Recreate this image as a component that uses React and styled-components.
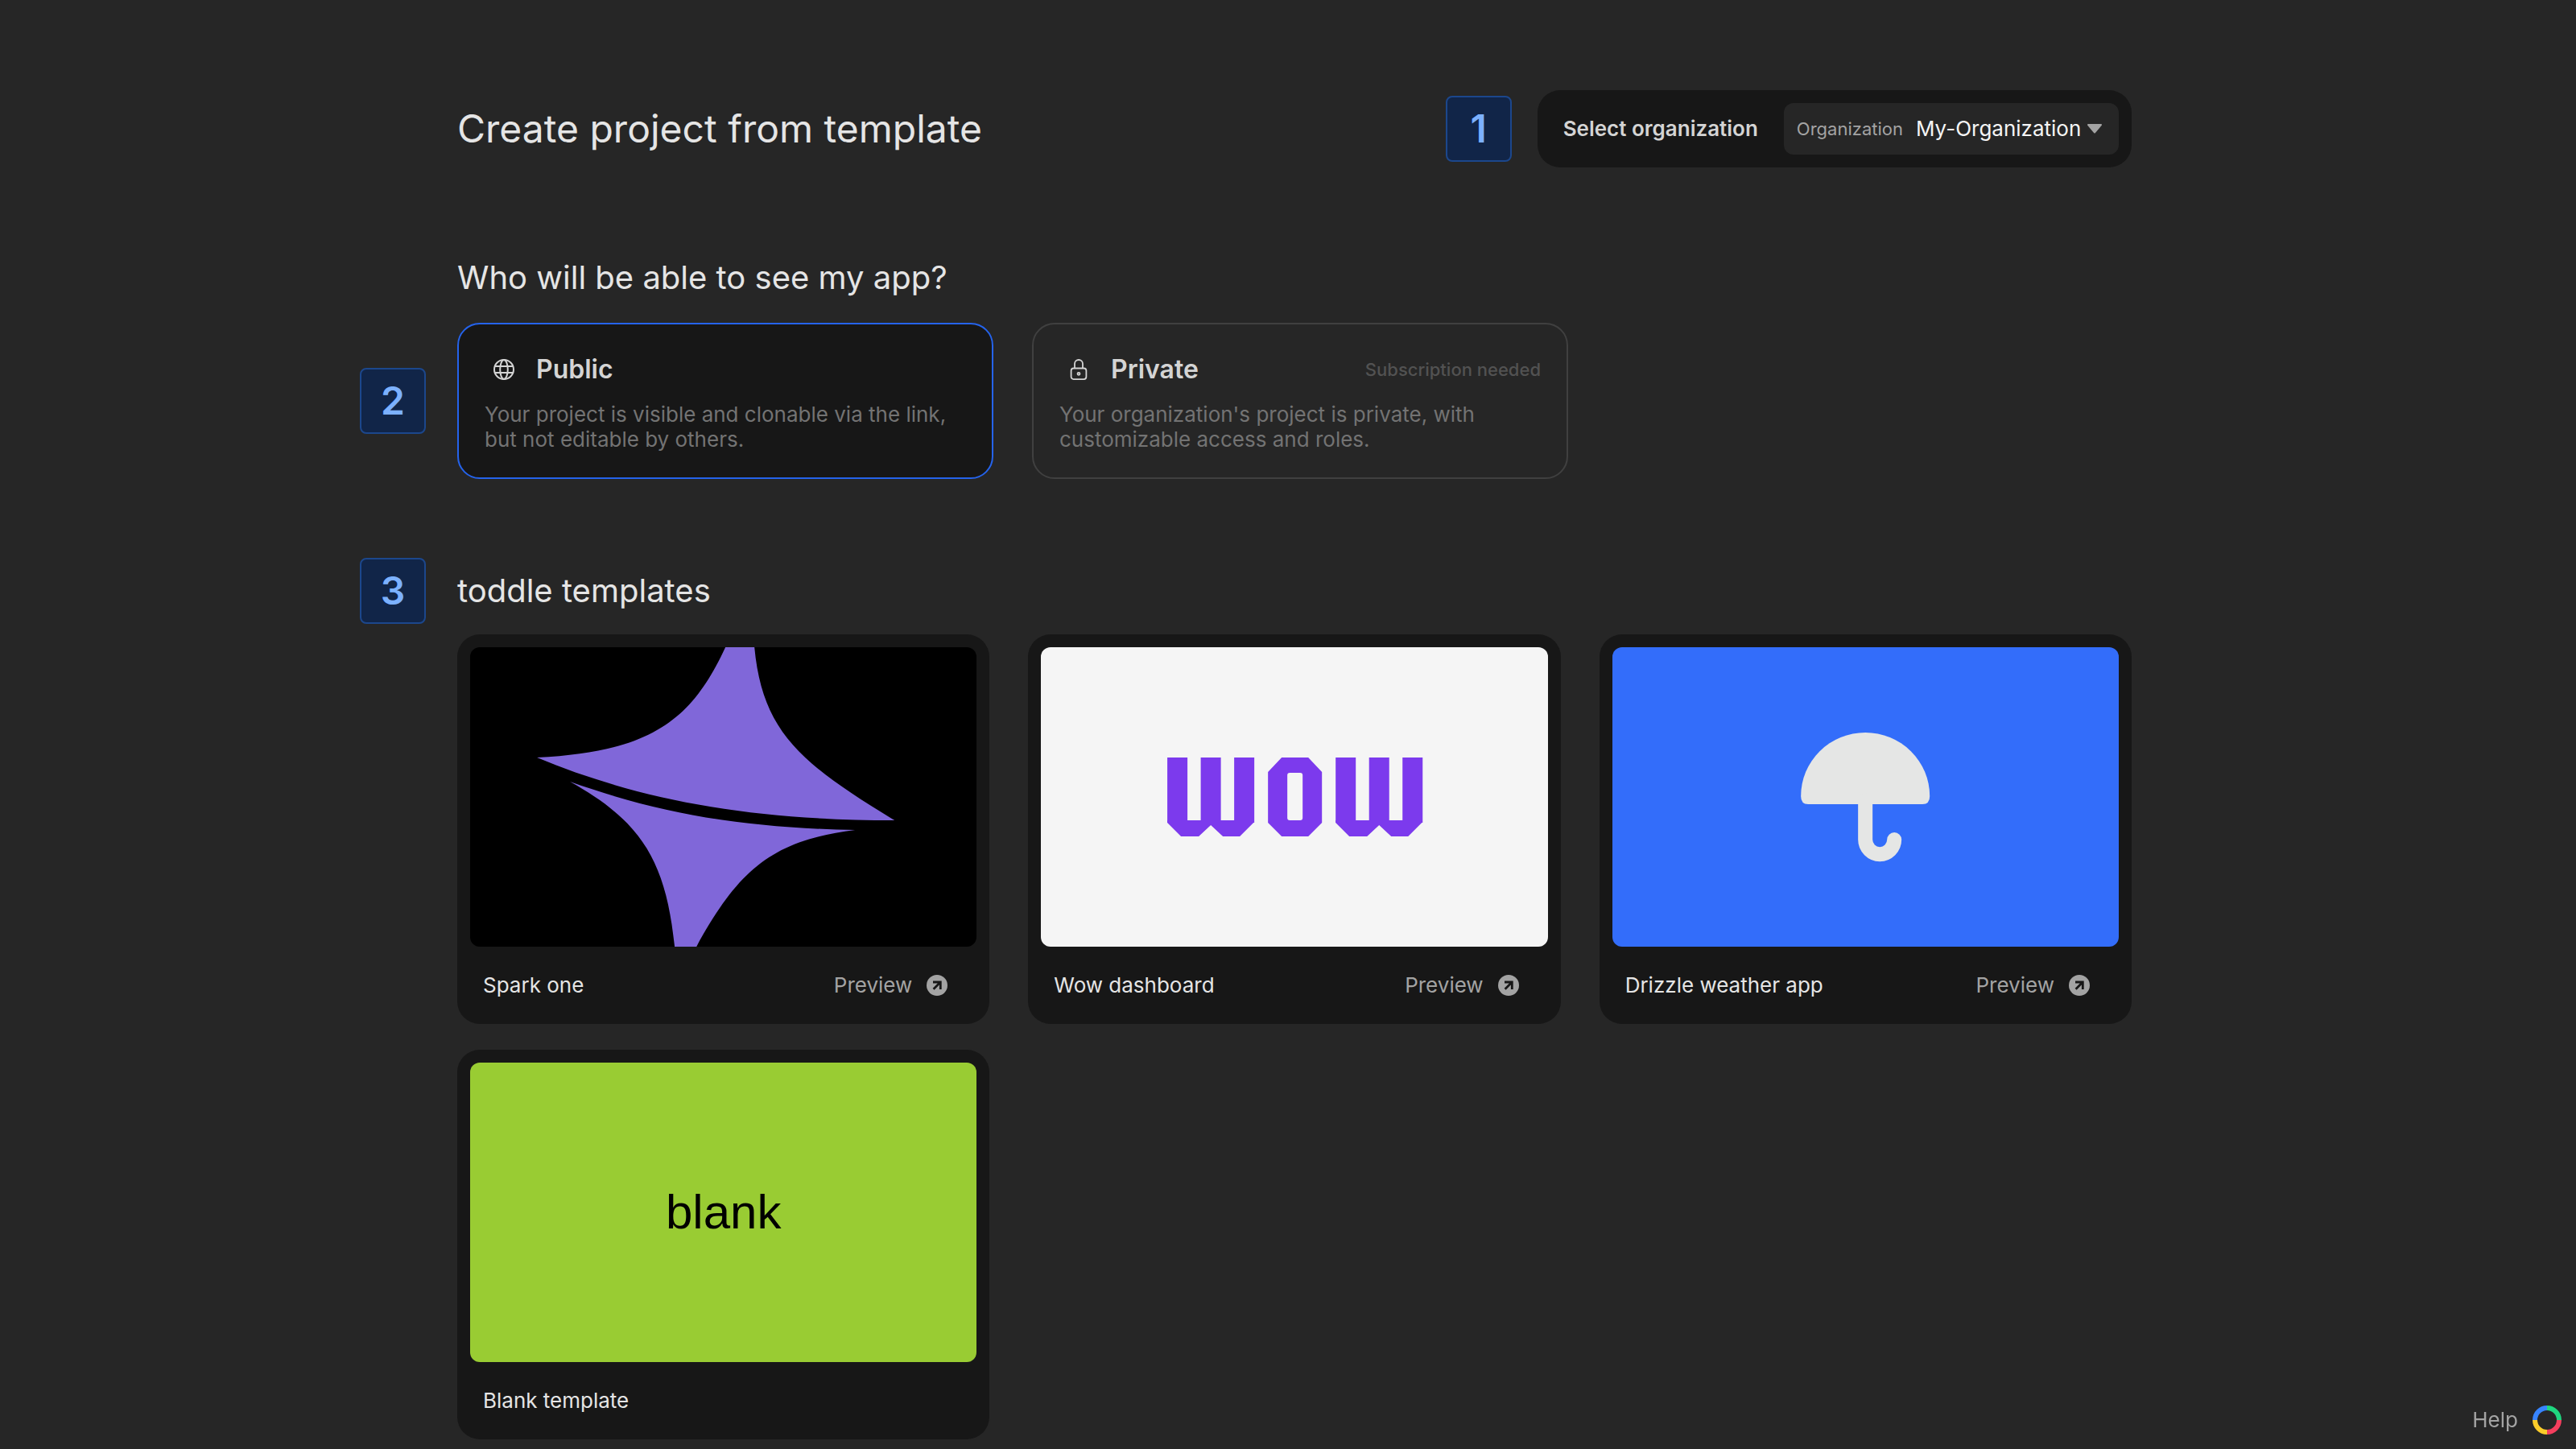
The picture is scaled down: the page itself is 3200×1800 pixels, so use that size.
import React from "react";
import styled, { createGlobalStyle } from "styled-components";

const GlobalStyle = createGlobalStyle`
  *, *::before, *::after { box-sizing: border-box; }
  html { height: 100%; }
  body {
    margin: 0;
    min-height: 100vh;
    background: #262626;
    color: #e5e5e5;
    font-family: Inter, "Liberation Sans", sans-serif;
    font-size: 26px;
    font-weight: 400;
    line-height: 32px;
  }
  h1, h2, h3, p, ul { margin: 0; padding: 0; }
  button, select, input { font: inherit; color: inherit; }
`;

const Page = styled.div`
  display: flex;
  justify-content: center;
  padding: 112px 128px 10px 144px;
`;

const Content = styled.main`
  display: flex;
  flex-direction: column;
  width: 100%;
  max-width: 2080px;
`;

const Header = styled.header`
  display: flex;
  align-items: center;
  justify-content: space-between;
  min-height: 96px;
`;

const Title = styled.h1`
  font-size: 48px;
  line-height: 56px;
  font-weight: 400;
`;

const Heading = styled.h2`
  font-size: 40px;
  line-height: 48px;
  font-weight: 400;
`;

const HeaderActions = styled.div`
  display: flex;
  align-items: center;
  gap: 32px;
`;

const StepBadge = styled.span`
  display: flex;
  align-items: center;
  justify-content: center;
  flex: none;
  width: 82px;
  height: 82px;
  border: 2px solid #1c478c;
  border-radius: 8px;
  background: #112548;
  color: #7cb1ff;
  font-size: 48px;
  line-height: 56px;
  font-weight: 600;
`;

const StepRow = styled.div`
  display: flex;
  align-items: center;
  gap: 39px;
  margin-left: -121px;
`;

const OrgPanel = styled.div`
  display: flex;
  align-items: center;
  gap: 32px;
  padding: 16px 16px 16px 32px;
  border-radius: 28px;
  background: #171717;
`;

const OrgLabel = styled.span`
  color: #d4d4d4;
  font-weight: 600;
`;

const SelectBox = styled.div`
  display: flex;
  align-items: center;
  gap: 16px;
  height: 64px;
  padding: 0 20px 0 16px;
  border-radius: 12px;
  background: #262626;
`;

const SelectLabel = styled.label`
  color: #a3a3a3;
  font-size: 22px;
`;

const SelectField = styled.div`
  display: flex;
  align-items: center;
  gap: 6px;
`;

const Select = styled.select`
  appearance: none;
  margin: 0;
  padding: 0;
  border: 0;
  outline: none;
  background: transparent;
  color: #f5f5f5;
`;

const VisibilitySection = styled.section`
  display: flex;
  flex-direction: column;
  gap: 32px;
  margin-top: 113px;
`;

const Options = styled.div`
  display: flex;
  gap: 48px;
`;

const Option = styled.button`
  display: flex;
  flex-direction: column;
  gap: 20px;
  width: 666px;
  height: 194px;
  padding: 36px 32px;
  border: 2px solid ${(p) => (p.$selected ? "#2563eb" : "#404040")};
  border-radius: 28px;
  background: ${(p) => (p.$selected ? "#171717" : "transparent")};
  text-align: left;
`;

const OptionHead = styled.span`
  display: flex;
  align-items: center;
  gap: 26px;
  width: 100%;
  padding-left: 10px;
  line-height: 40px;
`;

const OptionTitle = styled.span`
  flex: 1;
  color: #d4d4d4;
  font-size: 32px;
  font-weight: 600;
`;

const OptionNote = styled.span`
  color: #525252;
  font-size: 22px;
  font-weight: 500;
`;

const OptionText = styled.span`
  color: #737373;
  line-height: 31px;
`;

const TemplatesSection = styled.section`
  display: flex;
  flex-direction: column;
  gap: 13px;
  margin-top: 98px;
`;

const Grid = styled.ul`
  display: grid;
  grid-template-columns: repeat(3, minmax(0, 1fr));
  gap: 32px 48px;
  list-style: none;
`;

const Card = styled.li`
  display: flex;
  flex-direction: column;
  padding: 16px;
  border-radius: 28px;
  background: #171717;
`;

const Thumb = styled.div`
  display: flex;
  align-items: center;
  justify-content: center;
  overflow: hidden;
  aspect-ratio: 629 / 372;
  border-radius: 12px;
  background: ${(p) => p.$fill};
`;

const Cover = styled.svg`
  display: block;
  width: 100%;
  height: 100%;
`;

const BlankWord = styled.span`
  color: #000;
  font-family: "Liberation Sans Narrow", "Liberation Sans", sans-serif;
  font-size: 60px;
  line-height: 72px;
`;

const CardFooter = styled.div`
  display: flex;
  align-items: center;
  justify-content: space-between;
  height: 80px;
  padding: 16px 36px 0 16px;
`;

const CardName = styled.h3`
  color: #e5e5e5;
  font-size: 26px;
  font-weight: 400;
`;

const PreviewLink = styled.a`
  display: flex;
  align-items: center;
  gap: 18px;
  color: #a3a3a3;
  text-decoration: none;
`;

const HelpButton = styled.button`
  position: fixed;
  right: 18px;
  bottom: 18px;
  display: flex;
  align-items: center;
  gap: 18px;
  padding: 0;
  border: 0;
  background: transparent;
  color: #a3a3a3;
`;

const Caret = () => (
  <svg width="20" height="12" viewBox="0 0 20 12" aria-hidden="true">
    <path d="M2 1H18L10 10.500Z" fill="#a3a3a3" stroke="#a3a3a3" strokeWidth="2" strokeLinejoin="round" />
  </svg>
);

const Globe = () => (
  <svg width="28" height="28" viewBox="0 0 28 28" fill="none" stroke="#d4d4d4" strokeWidth="2" aria-hidden="true">
    <circle cx="14" cy="14" r="12" />
    <ellipse cx="14" cy="14" rx="4.800" ry="12" />
    <path d="M2.500 10H25.500M2.500 18H25.500" />
  </svg>
);

const Lock = () => (
  <svg width="28" height="28" viewBox="0 0 28 28" fill="none" stroke="#d4d4d4" strokeWidth="1.800" aria-hidden="true">
    <rect x="4.600" y="12.500" width="18.800" height="13.600" rx="3" />
    <path d="M9 12.500V7a5 5 0 0 1 10 0V12.500" />
    <circle cx="14" cy="19.300" r="1.500" />
  </svg>
);

const ArrowBadge = () => (
  <svg width="26" height="26" viewBox="0 0 26 26" fill="none" aria-hidden="true">
    <circle cx="13" cy="13" r="13" fill="#a3a3a3" />
    <path d="M8 9H17.300V18M17 9.300L8.600 17.700" stroke="#171717" strokeWidth="2.800" />
  </svg>
);

const Ring = () => (
  <svg width="36" height="36" viewBox="0 0 36 36" fill="none" strokeWidth="6" aria-hidden="true">
    <path d="M18 3A15 15 0 0 1 33 18" stroke="#1fd67f" />
    <path d="M33 18A15 15 0 0 1 18 33" stroke="#f43f5e" />
    <path d="M18 33A15 15 0 0 1 3 18" stroke="#facc2a" />
    <path d="M3 18A15 15 0 0 1 18 3" stroke="#3784ff" />
  </svg>
);

const SparkCover = () => (
  <Cover viewBox="0 0 629 372" preserveAspectRatio="xMidYMid slice" aria-hidden="true">
    <g fill="#8067d9">
      <path d="M317 0C276 88 228 130 83 137C210 190 350 215 527 215C410 144 363 105 353 0Z" />
      <path d="M124 167C240 208 340 224 478 227C376 240 334 275 281 372H254C243 262 210 215 124 167Z" />
    </g>
  </Cover>
);

const WowCover = () => (
  <Cover viewBox="0 0 629 372" preserveAspectRatio="xMidYMid slice" aria-hidden="true">
    <g stroke="#7c3aed" strokeWidth="25" fill="none">
      <path d="M169.500 137V218M211 137V218M252.500 137V218M378.500 137V218M420 137V218M461.500 137V218" />
    </g>
    <g fill="#7c3aed">
      <path d="M157 215H264V218L247 235H226L211 221L196 235H174L157 218Z" />
      <path d="M366 215H473V218L456 235H435L420 221L405 235H383L366 218Z" />
      <path fillRule="evenodd" d="M299 137H332L349 155V218L332 235H299L282 218V155ZM309 156Q306 156 306 159V212Q306 215 309 215H322Q325 215 325 212V159Q325 156 322 156Z" />
    </g>
  </Cover>
);

const UmbrellaCover = () => (
  <Cover viewBox="0 0 629 372" preserveAspectRatio="xMidYMid slice" aria-hidden="true">
    <path d="M234 185A80 79 0 0 1 394 185Q394 195 385 195H243Q234 195 234 185Z" fill="#e5e6e5" />
    <path d="M314 190V239A18 18 0 0 0 350 239" fill="none" stroke="#e5e6e5" strokeWidth="18" strokeLinecap="round" />
  </Cover>
);

const TEMPLATES = [
  { name: "Spark one", fill: "#000", cover: <SparkCover />, preview: true },
  { name: "Wow dashboard", fill: "#f5f5f5", cover: <WowCover />, preview: true },
  { name: "Drizzle weather app", fill: "#336dfa", cover: <UmbrellaCover />, preview: true },
  { name: "Blank template", fill: "#99cc33", cover: <BlankWord>blank</BlankWord>, preview: false },
];

export default function App() {
  return (
    <>
      <GlobalStyle />
      <Page>
        <Content>
          <Header>
            <Title>Create project from template</Title>
            <HeaderActions>
              <StepBadge>1</StepBadge>
              <OrgPanel>
                <OrgLabel>Select organization</OrgLabel>
                <SelectBox>
                  <SelectLabel htmlFor="organization">Organization</SelectLabel>
                  <SelectField>
                    <Select id="organization" defaultValue="my">
                      <option value="my">My-Organization</option>
                    </Select>
                    <Caret />
                  </SelectField>
                </SelectBox>
              </OrgPanel>
            </HeaderActions>
          </Header>

          <VisibilitySection>
            <Heading>Who will be able to see my app?</Heading>
            <StepRow>
              <StepBadge>2</StepBadge>
              <Options>
                <Option type="button" aria-pressed="true" $selected>
                  <OptionHead>
                    <Globe />
                    <OptionTitle>Public</OptionTitle>
                  </OptionHead>
                  <OptionText>Your project is visible and clonable via the link, but not editable by others.</OptionText>
                </Option>
                <Option type="button" aria-pressed="false">
                  <OptionHead>
                    <Lock />
                    <OptionTitle>Private</OptionTitle>
                    <OptionNote>Subscription needed</OptionNote>
                  </OptionHead>
                  <OptionText>Your organization's project is private, with customizable access and roles.</OptionText>
                </Option>
              </Options>
            </StepRow>
          </VisibilitySection>

          <TemplatesSection>
            <StepRow>
              <StepBadge>3</StepBadge>
              <Heading>toddle templates</Heading>
            </StepRow>
            <Grid>
              {TEMPLATES.map((t) => (
                <Card key={t.name}>
                  <Thumb $fill={t.fill}>{t.cover}</Thumb>
                  <CardFooter>
                    <CardName>{t.name}</CardName>
                    {t.preview && (
                      <PreviewLink href="#preview">
                        Preview
                        <ArrowBadge />
                      </PreviewLink>
                    )}
                  </CardFooter>
                </Card>
              ))}
            </Grid>
          </TemplatesSection>
        </Content>
      </Page>
      <HelpButton type="button">
        Help
        <Ring />
      </HelpButton>
    </>
  );
}
